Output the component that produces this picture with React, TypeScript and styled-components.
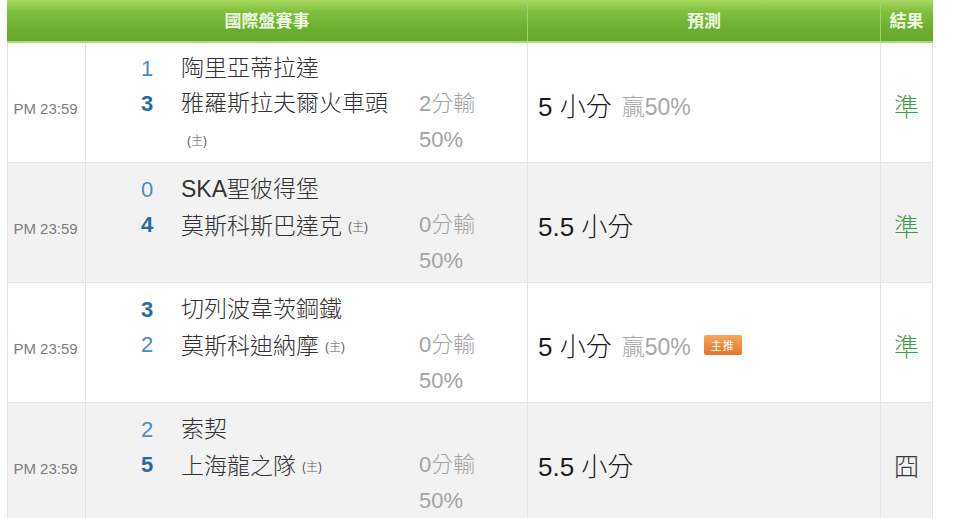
import React from "react";
import styled, { createGlobalStyle } from "styled-components";

const Global = createGlobalStyle`
  html, body { margin: 0; padding: 0; background: #ffffff; }
  body {
    font-family: "Liberation Sans", "Noto Sans CJK TC", sans-serif;
    color: #222;
  }
`;

const COLS = "78px 442px 353px 52px";

const Table = styled.div`
  margin-left: 7px;
  width: 926px;
`;

const HeaderRow = styled.div`
  display: grid;
  grid-template-columns: ${COLS};
  height: 43px;
  box-sizing: border-box;
  background: linear-gradient(#a9da5f 0%, #80bf3f 28%, #6cae31 70%, #66a92d 100%);
  border-bottom: 2px solid #aedd78;
`;

const HeadCell = styled.div<{ $span?: number; $divider?: boolean }>`
  grid-column: span ${(p) => p.$span ?? 1};
  display: flex;
  align-items: center;
  justify-content: center;
  color: #eef8e2;
  font-family: "Noto Sans CJK TC", sans-serif;
  font-weight: 700;
  font-size: 17px;
  border-left: ${(p) => (p.$divider ? "1px solid #9fd46a" : "none")};
  padding-bottom: 2px;
`;

const Row = styled.div<{ $alt?: boolean }>`
  display: grid;
  grid-template-columns: ${COLS};
  height: 120px;
  box-sizing: border-box;
  border-left: 1px solid #e3e3e3;
  border-bottom: 1px solid #e4e4e4;
  background: ${(p) => (p.$alt ? "#f2f2f2" : "#ffffff")};
`;

const Cell = styled.div`
  box-sizing: border-box;
  border-right: 1px solid #e3e3e3;
  display: flex;
  align-items: center;
`;

const TimeCell = styled(Cell)`
  justify-content: center;
  padding-top: 12px;
  padding-right: 2px;
  font-size: 15px;
  color: #7d7d7d;
`;

const MatchCell = styled(Cell)`
  padding-left: 40px;
  padding-top: 6px;
`;

const MatchGrid = styled.div`
  display: grid;
  grid-template-columns: 42px 236px 92px;
  align-items: start;
`;

const Score = styled.div<{ $win?: boolean }>`
  text-align: center;
  font-size: 22px;
  line-height: 35px;
  font-weight: ${(p) => (p.$win ? 700 : 400)};
  color: ${(p) => (p.$win ? "#2c6a9c" : "#4a8cc2")};
`;

const Name = styled.div`
  padding-left: 13px;
  font-size: 23px;
  font-weight: 300;
  line-height: 35px;
  color: #333;
`;

const Host = styled.span`
  display: inline-block;
  margin-left: 6px;
  font-size: 12px;
  color: #555;
  vertical-align: 3px;
  line-height: 40px;
`;

const Handicap = styled.div`
  padding-left: 15px;
  font-size: 22px;
  font-weight: 300;
  line-height: 36px;
  color: #a3a3a3;
`;

const HandicapLine = styled.div``;

const PredictCell = styled(Cell)`
  padding-left: 10px;
  padding-top: 4px;
`;

const PredictMain = styled.span`
  font-size: 26px;
  font-weight: 300;
  color: #1c1c1c;
`;

const PredictSub = styled.span`
  margin-left: 10px;
  font-size: 23px;
  font-weight: 300;
  color: #a8a8a8;
`;

const Badge = styled.span`
  margin-left: 13px;
  display: inline-flex;
  align-items: center;
  justify-content: center;
  width: 38px;
  height: 20px;
  border-radius: 2px;
  background: linear-gradient(#f4a75c, #e2762a);
  color: #fff;
  font-family: "Noto Sans CJK TC", sans-serif;
  font-size: 11px;
  letter-spacing: 1px;
`;

const ResultCell = styled(Cell)<{ $hit?: boolean }>`
  justify-content: center;
  padding-top: 4px;
  font-size: 25px;
  font-weight: 300;
  color: ${(p) => (p.$hit ? "#3e9c44" : "#3a3a3a")};
`;

type Match = {
  s1: number;
  t1: string;
  s2: number;
  t2: string;
  hc: string;
  pred: string;
  sub?: string;
  badge?: boolean;
  result: string;
};

const matches: Match[] = [
  { s1: 1, t1: "陶里亞蒂拉達", s2: 3, t2: "雅羅斯拉夫爾火車頭", hc: "2分輸", pred: "5 小分", sub: "贏50%", result: "準" },
  { s1: 0, t1: "SKA聖彼得堡", s2: 4, t2: "莫斯科斯巴達克", hc: "0分輸", pred: "5.5 小分", result: "準" },
  { s1: 3, t1: "切列波韋茨鋼鐵", s2: 2, t2: "莫斯科迪納摩", hc: "0分輸", pred: "5 小分", sub: "贏50%", badge: true, result: "準" },
  { s1: 2, t1: "索契", s2: 5, t2: "上海龍之隊", hc: "0分輸", pred: "5.5 小分", result: "囧" },
];

export default function App() {
  return (
    <>
      <Global />
      <Table>
        <HeaderRow>
          <HeadCell $span={2}>國際盤賽事</HeadCell>
          <HeadCell $divider>預測</HeadCell>
          <HeadCell $divider>結果</HeadCell>
        </HeaderRow>
        {matches.map((m, i) => (
          <Row key={i} $alt={i % 2 === 1}>
            <TimeCell>PM 23:59</TimeCell>
            <MatchCell>
              <MatchGrid>
                <Score $win={m.s1 > m.s2}>{m.s1}</Score>
                <Name>{m.t1}</Name>
                <div />
                <Score $win={m.s2 > m.s1}>{m.s2}</Score>
                <Name>
                  {m.t2}
                  <Host>(主)</Host>
                </Name>
                <Handicap>
                  <HandicapLine>{m.hc}</HandicapLine>
                  <HandicapLine>50%</HandicapLine>
                </Handicap>
              </MatchGrid>
            </MatchCell>
            <PredictCell>
              <PredictMain>{m.pred}</PredictMain>
              {m.sub && <PredictSub>{m.sub}</PredictSub>}
              {m.badge && <Badge>主推</Badge>}
            </PredictCell>
            <ResultCell $hit={m.result === "準"}>{m.result}</ResultCell>
          </Row>
        ))}
      </Table>
    </>
  );
}
